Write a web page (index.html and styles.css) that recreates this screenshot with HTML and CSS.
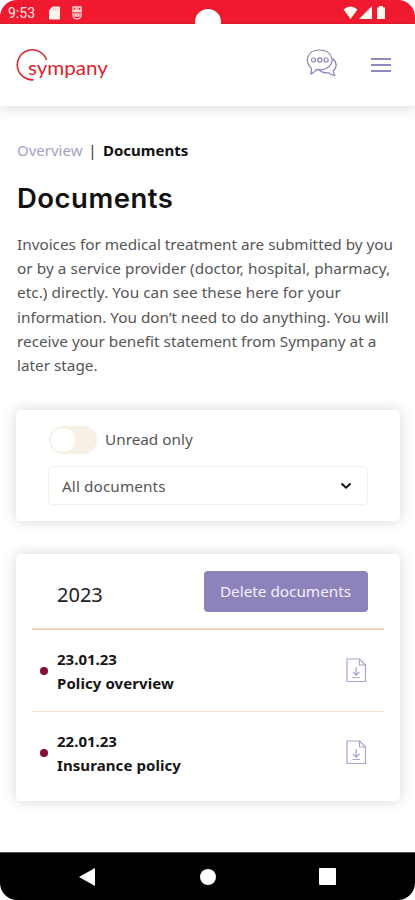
FILE: index.html
```html
<!DOCTYPE html>
<html lang="en">
<head>
<meta charset="utf-8">
<title>Documents</title>
<link rel="stylesheet" href="styles.css">
</head>
<body>
<div class="phone">
  <div class="status">
    <span class="time">9:53</span>
    <svg class="sd" width="13" height="14" viewBox="0 0 13 14"><path fill="#fff3ea" d="M4.5 .5H11a1 1 0 0 1 1 1v11a1 1 0 0 1-1 1H2a1 1 0 0 1-1-1V4.5z"/><path d="M5.5 2.5v2M7.5 2.5v2M9.5 2.5v2" stroke="#f3a09c" stroke-width=".8"/></svg>
    <svg class="shield" width="12" height="14" viewBox="0 0 12 14"><path d="M2 1h8v3.5H2zM1 5.5h10M2 7v2.500c0 2 2 3.500 4 3.500s4-1.500 4-3.500V7M4 2.800h4M4 8h4v2H4z" fill="none" stroke="#ffdcd6" stroke-width="1.300"/></svg>
    <svg class="signals" width="48" height="16" viewBox="0 0 48 16"><path fill="#fff8ed" d="M1.500 4.500Q8.500-1.500 15.500 4.500L8.500 14zM30 1v13H17zM35 2.500h2V1h4v1.500h2V14h-8z"/></svg>
    <i class="camera"></i>
  </div>
  <header class="header">
    <svg class="logo" width="98" height="40" viewBox="0 0 98 40"><path d="M30.500 15A15 15 0 1 0 17.500 34.800" fill="none" stroke="#d9252f" stroke-width="1.600"/><text x="12" y="29.500" textLength="80" lengthAdjust="spacingAndGlyphs">sympany</text></svg>
    <svg class="chat" width="32" height="28" viewBox="0 0 32 28"><g fill="none" stroke="#8c82bb" stroke-width="1.200" stroke-linejoin="round"><path d="M5 18.500C-1.500 13 .5 1 13.500 1s17 14 6.500 18.500c-3 1.300-7 1.500-9.500.8-1.500 2.500-3.500 4.200-6 4.700 1.200-2.500 1.200-4.500.5-6.500z"/><path d="M26.500 9.500c5 4 4.500 9.500.7 12.500 0 2 .6 3.200 1.800 4.500-2.500 0-4.500-1-6-2.700-4 .5-7.500-.5-10-3.300"/><circle cx="7.500" cy="11" r="2"/><circle cx="13.800" cy="11" r="2.200"/><circle cx="20.200" cy="11" r="2"/></g></svg>
    <span class="menu"><i></i><i></i><i></i></span>
  </header>
  <main class="main">
    <nav class="crumbs"><a>Overview</a><span class="sep">|</span><b>Documents</b></nav>
    <h1>Documents</h1>
    <p class="intro"><span>Invoices for medical treatment are submitted by you</span><span class="loose">or by a service provider (doctor, hospital, pharmacy,</span><span class="loose">etc.) directly. You can see these here for your</span><span>information. You don’t need to do anything. You will</span><span>receive your benefit statement from Sympany at a</span><span>later stage.</span></p>
    <section class="card filter">
      <div class="switch-row"><span class="switch"></span><span>Unread only</span></div>
      <div class="select"><span>All documents</span><svg width="12" height="8" viewBox="0 0 12 8"><path d="M1.500 1.500L6 5.700l4.500-4.200" fill="none" stroke="#111" stroke-width="2"/></svg></div>
    </section>
    <section class="card docs">
      <div class="docs-head"><h2>2023</h2><button>Delete documents</button></div>
      <div class="doc">
        <i class="dot"></i><div class="doc-text"><div>23.01.23</div><div>Policy overview</div></div>
        <svg class="file" width="21" height="25" viewBox="0 0 21 25"><path d="M1 1h12.500L19.500 7v16.500H1zM13.500 1v6h6M10.200 9v8M7 14l3.200 3.200 3.200-3.200M6.500 19.500h7.500"/></svg>
      </div>
      <div class="doc">
        <i class="dot"></i><div class="doc-text"><div>22.01.23</div><div>Insurance policy</div></div>
        <svg class="file" width="21" height="25" viewBox="0 0 21 25"><path d="M1 1h12.500L19.500 7v16.500H1zM13.500 1v6h6M10.200 9v8M7 14l3.200 3.200 3.200-3.200M6.500 19.500h7.500"/></svg>
      </div>
    </section>
  </main>
  <footer class="navbar">
    <svg width="16" height="18" viewBox="0 0 16 18"><path d="M0 9L16 0v18z" fill="#fff"/></svg>
    <i class="home"></i>
    <i class="recent"></i>
  </footer>
</div>
</body>
</html>
```
FILE: styles.css
```css
* { box-sizing: border-box; }
body { margin: 0; background: #fff; font: 15.3px "Noto Sans", sans-serif; color: #555; }
i { display: block; }
svg { display: block; flex: none; }
.phone { width: 415px; height: 900px; border-radius: 17px; overflow: hidden; background: #fff; display: flex; flex-direction: column; }
.status { position: relative; flex: none; height: 24px; background: #f01a30; display: flex; align-items: center; padding: 2px 25px 0 8px; border-bottom: 1px solid #dc1a2a; }
.time { font: 14px Roboto, sans-serif; color: #ffe9e6; width: 40px; }
.shield { margin-left: 10px; }
.signals { margin-left: auto; }
.camera { position: absolute; left: 195px; top: 9px; width: 26px; height: 26px; border-radius: 50%; background: #fff; }
.header { flex: none; height: 82px; display: flex; align-items: center; padding: 0 24px 0 16px; box-shadow: 0 3px 12px rgba(0,0,0,.13); }
.logo text { font: 20px Lato, sans-serif; fill: #d9252f; }
.chat { margin: -4px 1px 0 auto; }
.menu { display: flex; flex-direction: column; gap: 4px; width: 20px; margin-left: 32px; }
.menu i { height: 2px; background: #9388c0; }
.main { flex: 1; padding: 33px 15px 0 16px; }
.crumbs { display: flex; font-size: 15px; line-height: 22px; padding-left: 1px; }
.crumbs a { color: #a79dcc; width: 65px; }
.sep { width: 21px; text-align: center; color: #333; }
.crumbs b { color: #111; }
h1 { margin: 16px 0 0 1px; font: 600 27.500px/42px Inter, sans-serif; letter-spacing: .5px; color: #111; }
.intro { margin: 13px 0 0 1px; line-height: 24.200px; }
.intro span { display: block; white-space: nowrap; }
.intro .loose { letter-spacing: .07px; }
.card { background: #fff; border-radius: 5px; box-shadow: 0 0 14px rgba(0,0,0,.17); }
.filter { margin-top: 33px; height: 111px; padding: 16px 32px 0; }
.switch-row { display: flex; align-items: center; gap: 8px; height: 28px; padding-left: 1px; }
.switch-row span:last-child { margin-top: -2px; }
.switch { width: 48px; height: 28px; border-radius: 14px; background: #f7f0e6; padding: 2px; }
.switch::before { content: ""; display: block; width: 24px; height: 24px; border-radius: 50%; background: #fff; }
.select { margin-top: 12px; height: 39px; border: 1px solid #f6f1e7; border-radius: 5px; padding: 0 15px 0 13px; display: flex; align-items: center; justify-content: space-between; letter-spacing: .1px; }
.docs { margin-top: 33px; height: 247px; padding: 0 16px; }
.docs-head { height: 76px; border-bottom: 2px solid #efd5bf; display: flex; align-items: center; justify-content: space-between; padding: 0 16px 0 25px; }
h2 { margin: 6px 0 0; font: 20px "Noto Sans", sans-serif; color: #222; }
button { border: 0; border-radius: 4px; width: 164px; height: 41px; padding: 0 1px 0 0; background: #8e82bb; color: #f4f0ff; font: 15.3px "Noto Sans", sans-serif; }
.doc { height: 82px; display: flex; align-items: center; padding: 0 17px 0 8px; border-bottom: 1px solid #f4e0cf; }
.doc:last-child { border-bottom: 0; height: 81px; }
.dot { width: 8px; height: 8px; border-radius: 50%; background: #850b3d; margin-right: 9px; }
.doc-text { font-weight: 700; font-size: 15px; line-height: 24px; color: #161616; }
.doc-text div:last-child { letter-spacing: .08px; }
.file { margin-left: auto; fill: none; stroke: #aaa2cf; stroke-width: 1.200; }
.navbar { flex: none; height: 48px; background: #000; border-top: 1px solid #555; display: flex; align-items: center; padding-left: 79px; }
.home { width: 16px; height: 16px; border-radius: 50%; background: #fff; margin-left: 105px; }
.recent { width: 17px; height: 17px; border-radius: 1px; background: #fff; margin-left: 103px; }
```
